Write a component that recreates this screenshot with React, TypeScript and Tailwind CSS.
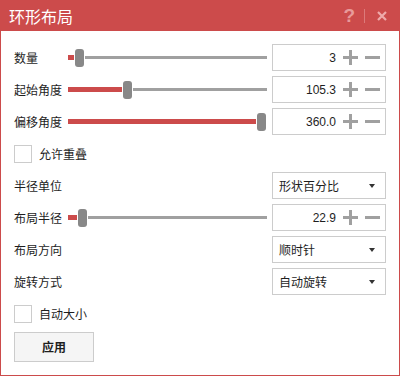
import { FC } from "react";

const RED = "#cc4b4b";

interface SliderRowProps {
  label: string;
  value: string;
  thumb: number; // px offset of the thumb from the track start
}

const Stepper: FC<{ value: string }> = ({ value }) => (
  <div className="w-[114px] h-full flex items-center border border-[#cccccc] bg-white">
    <span className="flex-1 text-right text-[12px] text-[#1e1e1e] font-['Liberation_Sans',sans-serif]">{value}</span>
    <svg width="15" height="15" viewBox="0 0 15 15" className="ml-[7px]">
      <path d="M0 7.5h15M7.5 0v15" stroke="#a0a0a0" strokeWidth="3" />
    </svg>
    <svg width="15" height="15" viewBox="0 0 15 15" className="ml-[7px] mr-[5px]">
      <path d="M0 7.5h15" stroke="#a0a0a0" strokeWidth="3" />
    </svg>
  </div>
);

const SliderRow: FC<SliderRowProps> = ({ label, value, thumb }) => (
  <div className="flex items-center h-[27px]">
    <span className="w-[54px] text-[12px] text-[#1e1e1e]">{label}</span>
    <div className="w-[199px] flex items-center h-[18px]">
      <div className="h-[5px]" style={{ width: thumb - 1, backgroundColor: RED }} />
      <div className="w-[9px] h-[18px] rounded-[3px] bg-[#888888] ml-[1px] shrink-0" />
      <div className="flex-1 h-[3px] bg-[#a0a0a0] ml-[1px]" />
    </div>
    <div className="ml-[5px] h-full">
      <Stepper value={value} />
    </div>
  </div>
);

const SelectRow: FC<{ label: string; value: string }> = ({ label, value }) => (
  <div className="flex items-center justify-between h-[27px]">
    <span className="text-[12px] text-[#1e1e1e]">{label}</span>
    <div className="w-[114px] h-full flex items-center border border-[#cccccc] bg-white pl-[6px] pr-[10px]">
      <span className="flex-1 text-[12px] text-[#1e1e1e]">{value}</span>
      <svg width="6" height="4" viewBox="0 0 6 4">
        <path d="M0 0h6L3 4z" fill="#333333" />
      </svg>
    </div>
  </div>
);

const CheckRow: FC<{ label: string }> = ({ label }) => (
  <div className="flex items-center h-[27px]">
    <div className="w-[18px] h-[18px] border border-[#cccccc] bg-white" />
    <span className="ml-[7px] text-[12px] text-[#1e1e1e]">{label}</span>
  </div>
);

export default function App() {
  return (
    <div className="w-[400px] h-[376px] flex flex-col bg-white border border-t-0 border-[#cc4b4b] font-['Noto_Sans_CJK_SC',sans-serif]">
      <div className="h-[31px] flex items-center bg-[#cc4b4b] shrink-0 -mx-[1px] pl-[9px] pr-[13px]">
        <span className="text-[16px] text-white flex-1 leading-none">环形布局</span>
        <span className="text-[19px] font-bold text-[#e89a9a] leading-none font-['Liberation_Sans',sans-serif]">?</span>
        <div className="w-[1px] h-[14px] bg-[#dc7a7a] ml-[9px]" />
        <svg width="10" height="10" viewBox="0 0 10 10" className="ml-[12px]">
          <path d="M1 1l8 8M9 1l-8 8" stroke="#eeaaaa" strokeWidth="2.2" />
        </svg>
      </div>
      <div className="flex flex-col gap-[5px] px-[13px] pt-[13px]">
        <SliderRow label="数量" value="3" thumb={7} />
        <SliderRow label="起始角度" value="105.3" thumb={55} />
        <SliderRow label="偏移角度" value="360.0" thumb={189} />
        <CheckRow label="允许重叠" />
        <SelectRow label="半径单位" value="形状百分比" />
        <SliderRow label="布局半径" value="22.9" thumb={10} />
        <SelectRow label="布局方向" value="顺时针" />
        <SelectRow label="旋转方式" value="自动旋转" />
        <CheckRow label="自动大小" />
        <button className="w-[80px] h-[30px] border border-[#cccccc] bg-[#f5f5f5] text-[12px] font-bold text-[#1e1e1e]">
          应用
        </button>
      </div>
    </div>
  );
}
